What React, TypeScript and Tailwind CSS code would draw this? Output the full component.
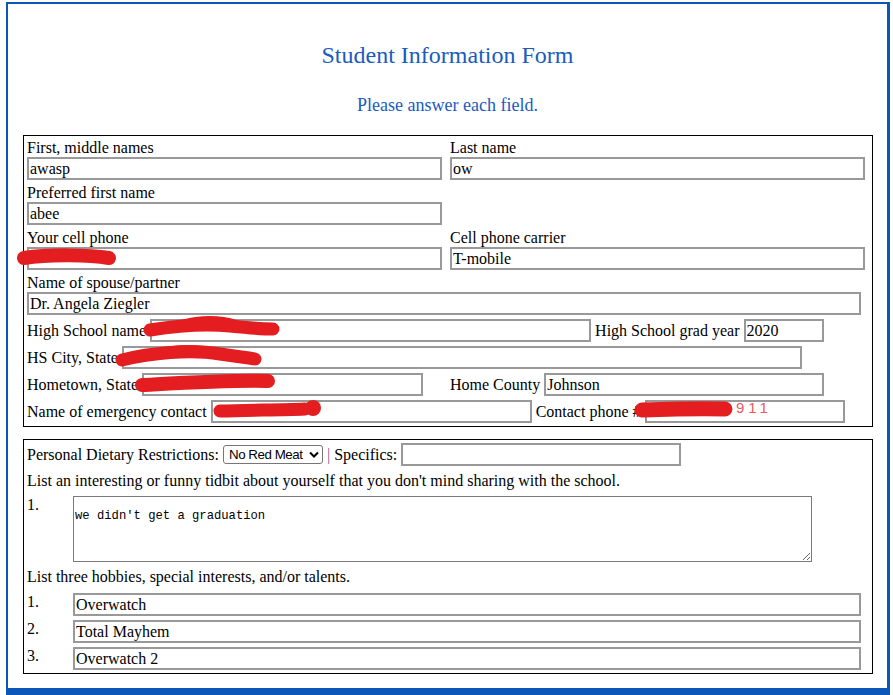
import React from "react";

// text inputs as rendered by the old form: 2px grey border, serif text
function Field({ w, value = "" }: { w: string; value?: string }) {
  return (
    <input
      readOnly
      defaultValue={value}
      className={`${w} h-[23px] shrink-0 border-2 border-[#999] bg-white px-[1px] text-[16px] leading-[18px] text-black outline-none`}
    />
  );
}

function Labelled({ label, w, value }: { label: string; w: string; value?: string }) {
  return (
    <div className="flex flex-col">
      <span className="leading-[18px]">{label}</span>
      <Field w={w} value={value} />
    </div>
  );
}

function Redactions() {
  return (
    <svg
      className="pointer-events-none absolute left-0 top-0"
      width={893}
      height={695}
      viewBox="0 0 893 695"
      fill="none"
      stroke="#e41e20"
      strokeLinecap="round"
      strokeLinejoin="round"
    >
      {/* cell phone */}
      <path d="M24 258 C50 254, 90 255, 109 258" strokeWidth={14} />
      {/* high school name */}
      <path d="M150 330 C175 326, 200 323, 230 326 C250 328, 265 329, 273 329" strokeWidth={13} />
      <path d="M182 325 C200 320, 220 320, 236 325" strokeWidth={10} />
      {/* hs city */}
      <path d="M122 360 C150 353, 190 349, 220 354 C240 357, 250 358, 255 359" strokeWidth={13} />
      <path d="M150 354 C170 349, 190 348, 205 350" strokeWidth={8} />
      {/* hometown */}
      <path d="M142 385 C180 383, 230 380, 268 381" strokeWidth={14} />
      {/* emergency contact */}
      <path d="M220 411 C250 410, 280 410, 305 409" strokeWidth={13} />
      <circle cx={313} cy={408} r={8} fill="#e41e20" stroke="none" />
      {/* contact phone */}
      <path d="M642 410 C670 409, 700 408, 725 409" strokeWidth={15} />
    </svg>
  );
}

export default function App() {
  return (
    <div className="relative h-[695px] w-[893px] overflow-hidden bg-white font-['Liberation_Serif','Times_New_Roman',serif] text-[16px] text-black">
      <div className="ml-[6px] mt-[2px] h-[693px] w-[884px] border-b-[7px] border-l-2 border-r-[3px] border-t-2 border-[#0b56b8]">
        <h1 className="mt-[37px] text-center text-[24px] leading-[28px] text-[#1a5bbd]">Student Information Form</h1>
        <p className="mt-[25px] text-center text-[18px] leading-[22px] text-[#1a5bbd]">Please answer each field.</p>

        {/* personal details */}
        <div className="ml-[15px] mt-[19px] w-[850px] border border-black px-[3px] pb-[3px] pt-[3px]">
          <div className="flex gap-[8px]">
            <Labelled label="First, middle names" w="w-[415px]" value="awasp" />
            <Labelled label="Last name" w="w-[415px]" value="ow" />
          </div>
          <div className="mt-[4px] flex">
            <Labelled label="Preferred first name" w="w-[415px]" value="abee" />
          </div>
          <div className="mt-[4px] flex gap-[8px]">
            <Labelled label="Your cell phone" w="w-[415px]" />
            <Labelled label="Cell phone carrier" w="w-[415px]" value="T-mobile" />
          </div>
          <div className="mt-[4px]">
            <Labelled label="Name of spouse/partner" w="w-[834px]" value="Dr. Angela Ziegler" />
          </div>

          <div className="mt-[4px] flex items-center gap-[4px] leading-[18px]">
            <span>High School name</span>
            <Field w="w-[441px]" />
            <span>High School grad year</span>
            <Field w="w-[80px]" value="2020" />
          </div>
          <div className="mt-[4px] flex items-center gap-[4px] leading-[18px]">
            <span>HS City, State</span>
            <Field w="w-[680px]" />
          </div>
          <div className="mt-[4px] flex gap-[8px] leading-[18px]">
            <div className="flex w-[415px] items-center gap-[4px]">
              <span>Hometown, State</span>
              <Field w="w-[281px]" />
            </div>
            <div className="flex items-center gap-[4px]">
              <span>Home County</span>
              <Field w="w-[280px]" value="Johnson" />
            </div>
          </div>
          <div className="mt-[4px] flex items-center gap-[4px] leading-[18px]">
            <span>Name of emergency contact</span>
            <Field w="w-[321px]" />
            <span>Contact phone #</span>
            <Field w="w-[200px]" />
          </div>
        </div>

        {/* extra info */}
        <div className="ml-[15px] mt-[12px] w-[850px] border border-black px-[3px] pb-[3px] pt-[3px]">
          <div className="flex h-[23px] items-center gap-[4px] leading-[18px]">
            <span>Personal Dietary Restrictions:</span>
            <div className="flex h-[19px] w-[100px] shrink-0 items-center justify-between rounded-[3px] border border-[#767676] pl-[5px] pr-[3px] font-['Liberation_Sans',Arial,sans-serif] text-[13.33px] tracking-[-0.45px]">
              <span>No Red Meat</span>
              <svg width="10" height="7" viewBox="0 0 10 7" fill="none" stroke="#000" strokeWidth="2">
                <path d="M1 1.5 L5 5.5 L9 1.5" />
              </svg>
            </div>
            <span className="text-[#6e5a8c]">|</span>
            <span>Specifics:</span>
            <Field w="w-[280px]" />
          </div>
          <p className="mt-[6px] leading-[18px]">List an interesting or funny tidbit about yourself that you don't mind sharing with the school.</p>
          <div className="mt-[6px] flex items-start">
            <span className="w-[46px] leading-[18px]">1.</span>
            <textarea
              readOnly
              defaultValue="we didn't get a graduation"
              className="h-[66px] w-[739px] border border-[#7a7a7a] bg-white pl-[1px] pt-[11px] font-['Liberation_Mono','Courier_New',monospace] text-[12.2px] leading-[16px] text-black outline-none"
            />
          </div>
          <p className="mt-[6px] leading-[18px]">List three hobbies, special interests, and/or talents.</p>
          {["Overwatch", "Total Mayhem", "Overwatch 2"].map((h, i) => (
            <div key={h} className={`flex items-start ${i === 0 ? "mt-[7px]" : "mt-[4px]"}`}>
              <span className="w-[46px] leading-[18px]">{i + 1}.</span>
              <Field w="w-[788px]" value={h} />
            </div>
          ))}
        </div>
      </div>

      <Redactions />
      <span className="pointer-events-none absolute left-[736px] top-[399px] font-['Liberation_Sans',Arial,sans-serif] text-[15px] leading-[18px] tracking-[4px] text-[#ee5a5a]">
        911
      </span>
    </div>
  );
}
